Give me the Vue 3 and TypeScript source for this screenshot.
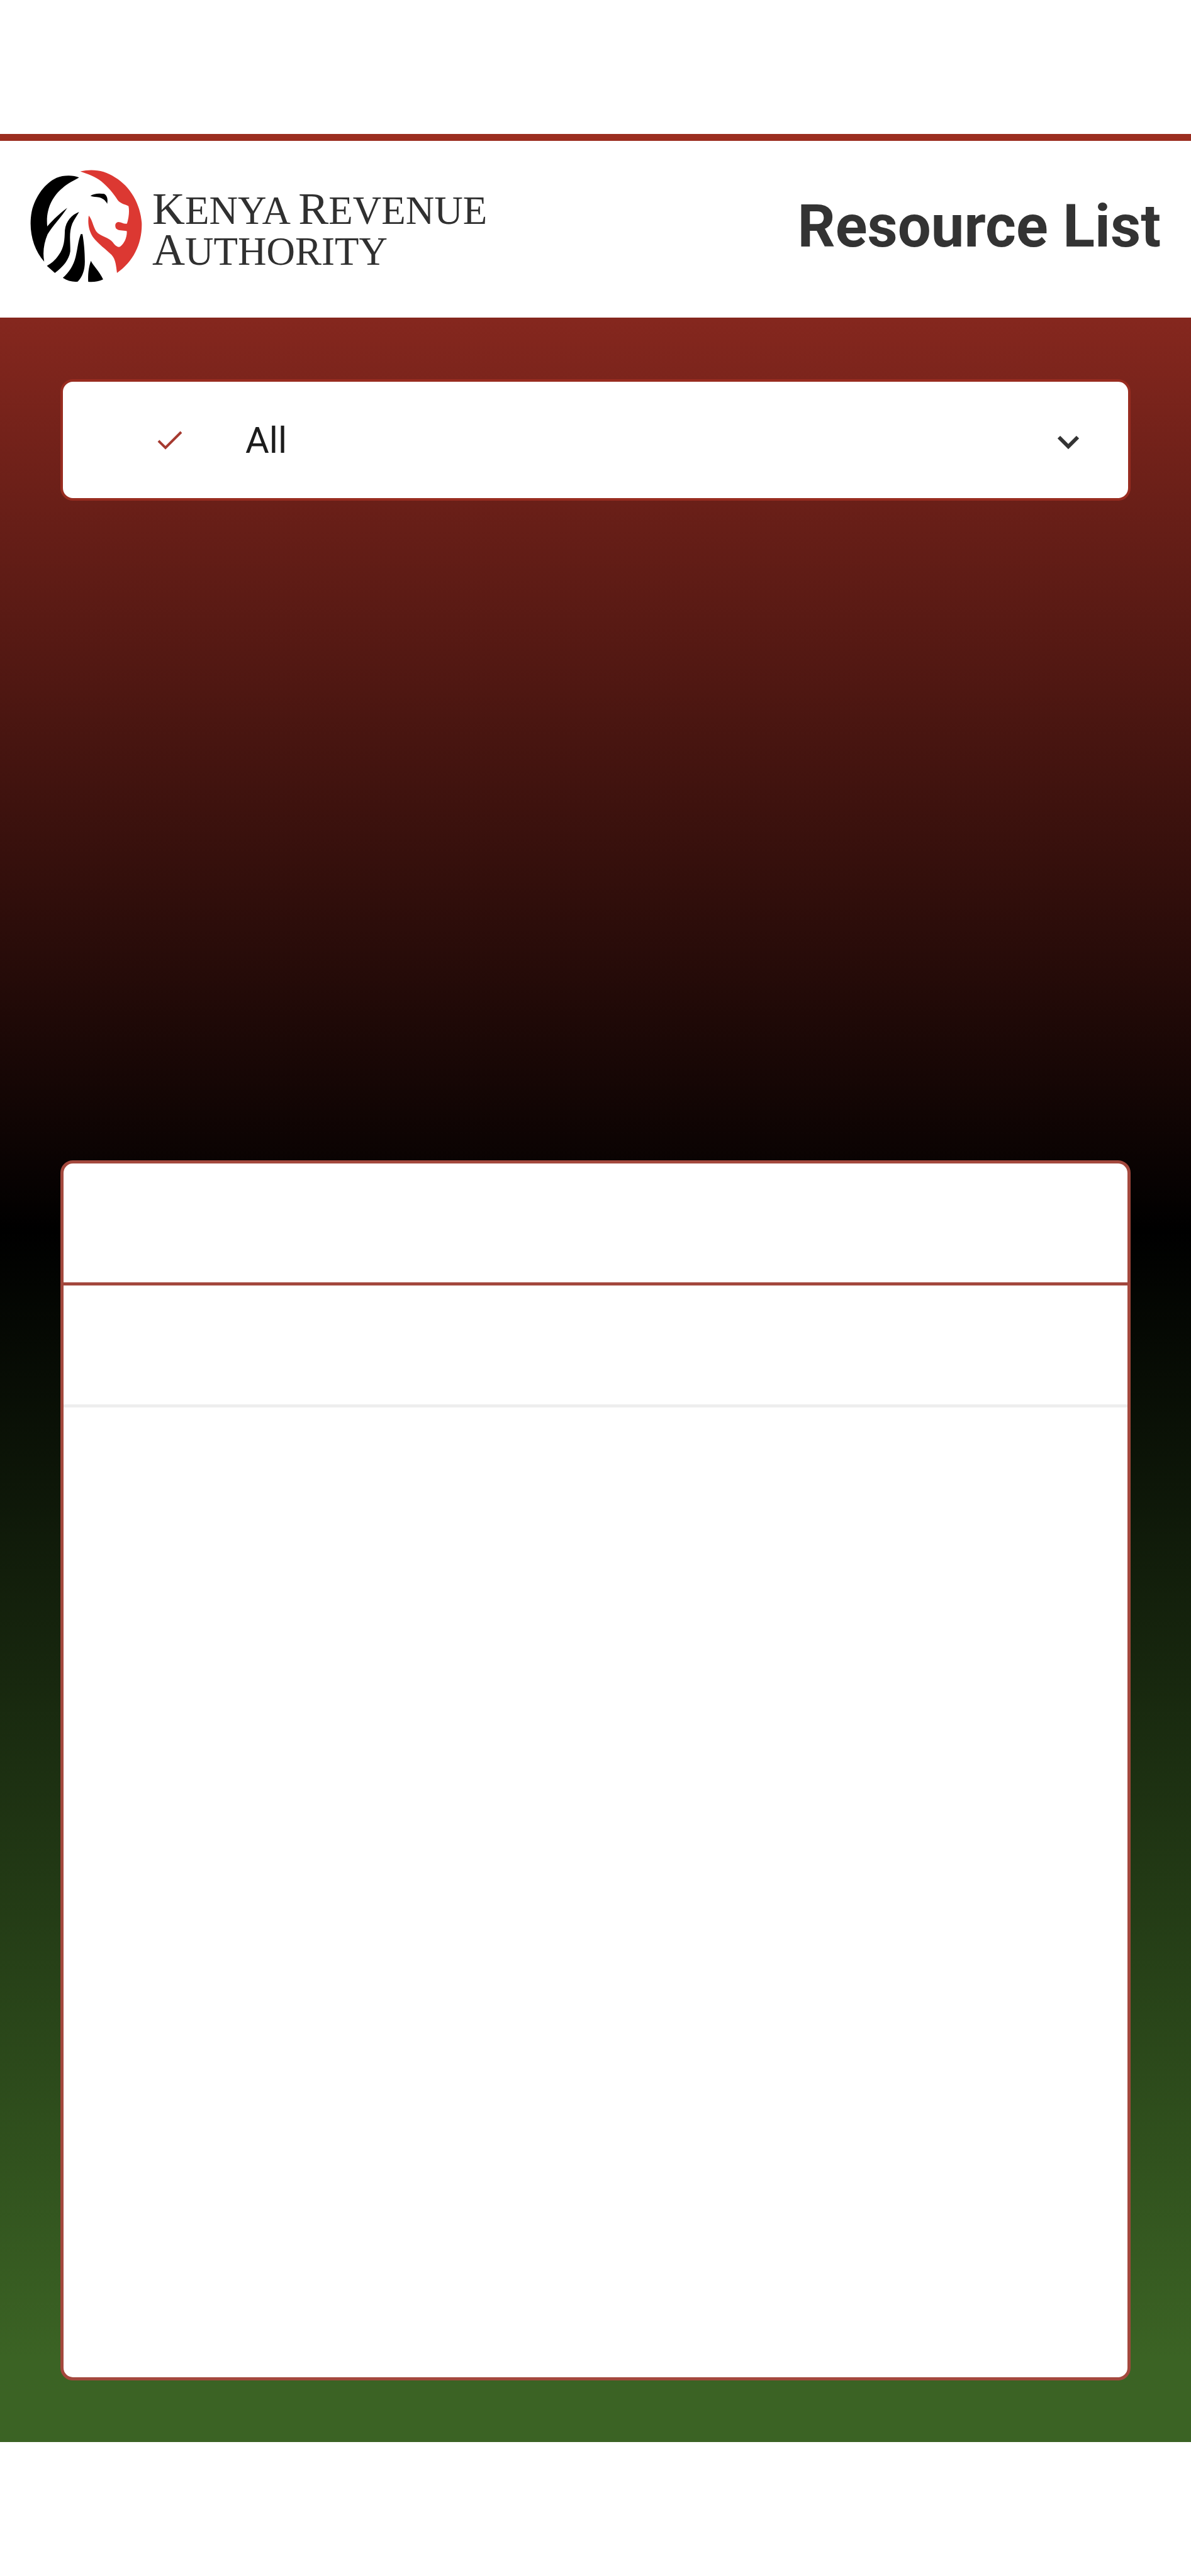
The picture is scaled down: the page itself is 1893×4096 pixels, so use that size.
<script setup lang="ts">
import { ref } from 'vue'

const categories: string[] = ['All']
const selected = ref<string>('All')
</script>

<template>
  <div class="page">
    <header class="header">
      <a class="brand" href="#" aria-label="Kenya Revenue Authority">
        <svg class="emblem" viewBox="60 60 660 680" aria-hidden="true">
          <g fill="#000">
            <path d="M348 113C315 98 255 98 215 115C150 145 90 220 68 315C48 420 75 535 142 610C132 555 140 500 162 448C195 395 240 350 278 292C235 325 200 355 160 402C150 300 190 225 250 175C285 145 318 130 348 113Z" />
            <path d="M348 316C305 332 270 370 264 425C262 480 262 525 225 575C205 603 185 620 158 635L205 677C255 640 288 600 296 550C298 490 286 440 308 385C320 358 335 340 348 316Z" />
            <path d="M358 447C342 490 340 530 328 580C316 635 285 675 252 706C280 725 315 732 340 728C368 700 382 660 382 610C382 550 376 490 368 447Z" />
            <path d="M418 605C425 625 470 670 490 715C465 728 430 732 402 729C400 690 403 645 418 605Z" />
            <path d="M415 222C435 206 470 205 496 210C512 218 520 240 514 268C502 245 485 235 465 230C448 226 432 229 415 222Z" />
          </g>
          <path fill="#dc3832" d="M355 77C430 60 500 72 560 112C650 165 710 270 718 380C722 500 670 610 572 677C566 635 565 598 540 570C510 540 460 505 430 465C405 425 398 385 405 338C425 360 430 400 448 430C475 465 525 465 548 497C560 514 575 528 590 522C615 505 632 465 630 430C605 425 580 428 567 415C558 400 560 378 580 376C600 378 615 390 631 385C642 350 646 310 640 282C615 270 590 266 575 245C550 205 520 170 480 136C440 105 395 92 355 77Z" />
        </svg>
        <span class="wordmark">
          <span><b>K</b>ENYA <b>R</b>EVENUE</span>
          <span><b>A</b>UTHORITY</span>
        </span>
      </a>
      <h1 class="title">Resource List</h1>
    </header>

    <main class="content">
      <div class="filter">
        <svg class="check" viewBox="0 0 40 32" aria-hidden="true">
          <path d="M2 17L13 28L38 3" fill="none" stroke="#a63a30" stroke-width="4" />
        </svg>
        <select v-model="selected" class="select" aria-label="Category">
          <option v-for="c in categories" :key="c" :value="c">{{ c }}</option>
        </select>
        <svg class="chevron" viewBox="0 0 34 24" aria-hidden="true">
          <path d="M2 3L17 18L32 3" fill="none" stroke="#333" stroke-width="6" />
        </svg>
      </div>

      <section class="card" aria-label="Resources">
        <div class="card-head"></div>
        <div class="card-row"></div>
      </section>
    </main>
  </div>
</template>

<style>
body {
  margin: 0;
  background: #fff;
}
</style>

<style scoped>
.page {
  box-sizing: border-box;
  min-height: 100vh;
  padding: 213px 0;
  display: flex;
  flex-direction: column;
  font-family: Roboto, "Liberation Sans", sans-serif;
}

.header {
  box-sizing: border-box;
  height: 292px;
  padding: 0 48px 10px;
  border-top: 11px solid #9b2d20;
  display: flex;
  align-items: center;
  justify-content: space-between;
  background: #fff;
}

.brand {
  display: flex;
  align-items: center;
  gap: 16px;
  color: #303030;
  text-decoration: none;
}

.emblem {
  width: 178px;
  height: 183px;
}

.wordmark {
  padding-top: 12px;
  display: flex;
  flex-direction: column;
  font-family: "Liberation Serif", serif;
  font-size: 63px;
  line-height: 62px;
  white-space: nowrap;
}

.wordmark b {
  font-size: 72px;
  font-weight: 400;
  line-height: 62px;
}

.title {
  margin: 0;
  color: #333;
  font-size: 94px;
  font-weight: 700;
  line-height: 120px;
  white-space: nowrap;
}

.content {
  flex: 1;
  padding: 98px 96px;
  display: flex;
  flex-direction: column;
  gap: 1049px;
  background: linear-gradient(#85271e 0%, #000 43%, #3b6324 96%);
}

.filter {
  display: grid;
  grid-template-columns: 154px 40px 1fr 34px 82px;
  align-items: center;
}

.select {
  grid-area: 1 / 1 / 2 / -1;
  box-sizing: border-box;
  width: 100%;
  height: 193px;
  padding: 0 120px 0 290px;
  border: 4px solid #982c20;
  border-radius: 20px;
  background: #fff;
  color: #1c1c1c;
  font-family: inherit;
  font-size: 58px;
  appearance: none;
}

.check,
.chevron {
  z-index: 1;
  pointer-events: none;
}

.check {
  grid-area: 1 / 2;
  height: 32px;
}

.chevron {
  grid-area: 1 / 4;
  height: 24px;
  margin-top: 8px;
}

.card {
  flex: 1;
  border: 5px solid #a3483d;
  border-radius: 20px;
  background: #fff;
}

.card-head {
  height: 189px;
  border-bottom: 5px solid #a3483d;
}

.card-row {
  height: 189px;
  border-bottom: 5px solid #eee;
}
</style>
